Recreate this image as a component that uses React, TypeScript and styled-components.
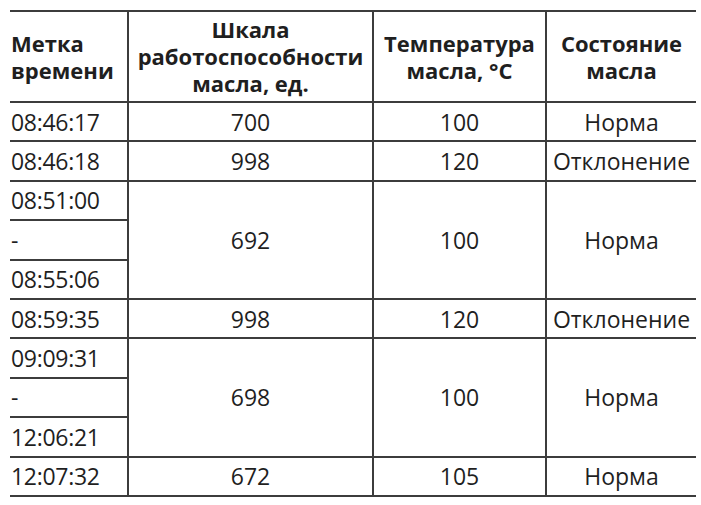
import React from "react";
import styled, { createGlobalStyle } from "styled-components";

const GlobalStyle = createGlobalStyle`
  html, body {
    margin: 0;
    padding: 0;
    background: #ffffff;
  }
  body {
    font-family: "Open Sans", "Liberation Sans", sans-serif;
    color: #1f1f1f;
  }
`;

const Page = styled.div`
  padding: 10px 0 0 10px;
`;

const Table = styled.table`
  width: 686px;
  border-collapse: collapse;
  table-layout: fixed;
  border-top: 2px solid #3c3c3c;
  border-bottom: 2px solid #3c3c3c;
`;

const HeadCell = styled.th<{ $left?: boolean }>`
  height: 89px;
  padding: 0;
  font-size: 22px;
  line-height: 27px;
  font-weight: 700;
  white-space: nowrap;
  text-align: ${(p) => (p.$left ? "left" : "center")};
  vertical-align: middle;
  border-bottom: 2px solid #3c3c3c;
  border-left: 2px solid #3c3c3c;
  &:first-child {
    border-left: none;
    padding-left: 1px;
  }
`;

const HeadLine = styled.span`
  display: block;
`;

const Row = styled.tr`
  height: 39.4px;
`;

const Cell = styled.td<{ $left?: boolean }>`
  padding: 0;
  font-size: 23px;
  line-height: 26px;
  font-weight: 400;
  white-space: nowrap;
  text-align: ${(p) => (p.$left ? "left" : "center")};
  vertical-align: middle;
  border-bottom: 2px solid #3c3c3c;
  border-left: 2px solid #3c3c3c;
`;

const TimeCell = styled(Cell)`
  border-left: none;
  padding-left: 1px;
  letter-spacing: -0.3px;
`;

type Entry = {
  times: string[];
  scale: number;
  temp: number;
  state: string;
};

const headers: { lines: string[]; left?: boolean }[] = [
  { lines: ["Метка", "времени"], left: true },
  { lines: ["Шкала", "работоспособности", "масла, ед."] },
  { lines: ["Температура", "масла, °С"] },
  { lines: ["Состояние", "масла"] },
];

const data: Entry[] = [
  { times: ["08:46:17"], scale: 700, temp: 100, state: "Норма" },
  { times: ["08:46:18"], scale: 998, temp: 120, state: "Отклонение" },
  { times: ["08:51:00", "-", "08:55:06"], scale: 692, temp: 100, state: "Норма" },
  { times: ["08:59:35"], scale: 998, temp: 120, state: "Отклонение" },
  { times: ["09:09:31", "-", "12:06:21"], scale: 698, temp: 100, state: "Норма" },
  { times: ["12:07:32"], scale: 672, temp: 105, state: "Норма" },
];

const App = () => {
  return (
    <>
      <GlobalStyle />
      <Page>
        <Table>
          <colgroup>
            <col style={{ width: 118 }} />
            <col style={{ width: 245 }} />
            <col style={{ width: 173 }} />
            <col style={{ width: 150 }} />
          </colgroup>
          <thead>
            <tr>
              {headers.map((h) => (
                <HeadCell key={h.lines[0]} $left={h.left}>
                  {h.lines.map((line) => (
                    <HeadLine key={line}>{line}</HeadLine>
                  ))}
                </HeadCell>
              ))}
            </tr>
          </thead>
          <tbody>
            {data.map((el, i) =>
              el.times.map((t, j) => (
                <Row key={`${i}-${j}`}>
                  <TimeCell $left>{t}</TimeCell>
                  {j === 0 && (
                    <>
                      <Cell rowSpan={el.times.length}>{el.scale}</Cell>
                      <Cell rowSpan={el.times.length}>{el.temp}</Cell>
                      <Cell rowSpan={el.times.length}>{el.state}</Cell>
                    </>
                  )}
                </Row>
              ))
            )}
          </tbody>
        </Table>
      </Page>
    </>
  );
};

export default App;
